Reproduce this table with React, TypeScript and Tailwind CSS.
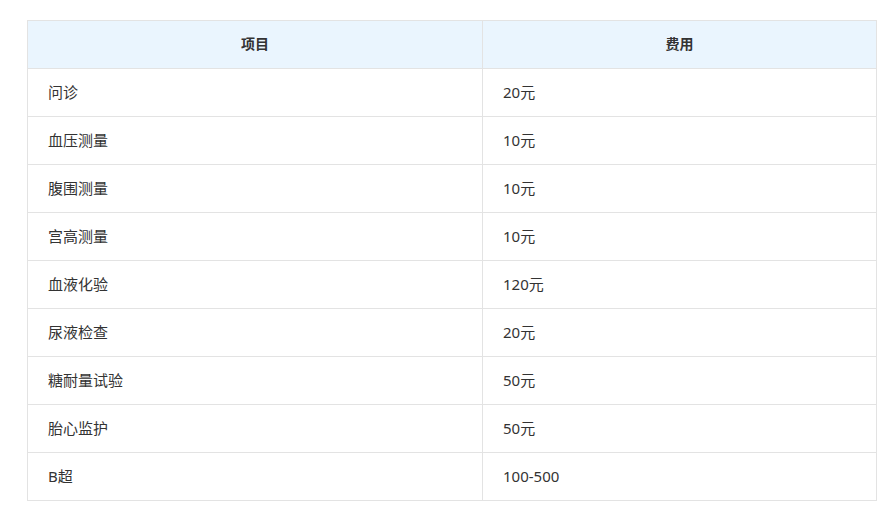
import React from 'react';

const rows: [string, string][] = [
  ['问诊', '20元'],
  ['血压测量', '10元'],
  ['腹围测量', '10元'],
  ['宫高测量', '10元'],
  ['血液化验', '120元'],
  ['尿液检查', '20元'],
  ['糖耐量试验', '50元'],
  ['胎心监护', '50元'],
  ['B超', '100-500'],
];

const App: React.FC = () => {
  return (
    <div className="min-h-screen bg-white pt-5 pl-[27px] font-['Noto_Sans','Noto_Sans_CJK_SC',sans-serif] text-[15px] text-[#333]">
      <table className="w-[850px] border-collapse table-fixed">
        <thead>
          <tr className="h-12 bg-[#eaf5fe]">
            <th className="w-[455px] border border-[#e3e3e3] pb-[2px] text-[14px] font-bold text-center">项目</th>
            <th className="border border-[#e3e3e3] pb-[2px] text-[14px] font-bold text-center">费用</th>
          </tr>
        </thead>
        <tbody>
          {rows.map(([item, fee]) => (
            <tr key={item} className="h-12">
              <td className="border border-[#e3e3e3] px-5 pb-[2px] leading-6">{item}</td>
              <td className="border border-[#e3e3e3] px-5 pb-[2px] leading-6">{fee}</td>
            </tr>
          ))}
        </tbody>
      </table>
    </div>
  );
};

export default App;
